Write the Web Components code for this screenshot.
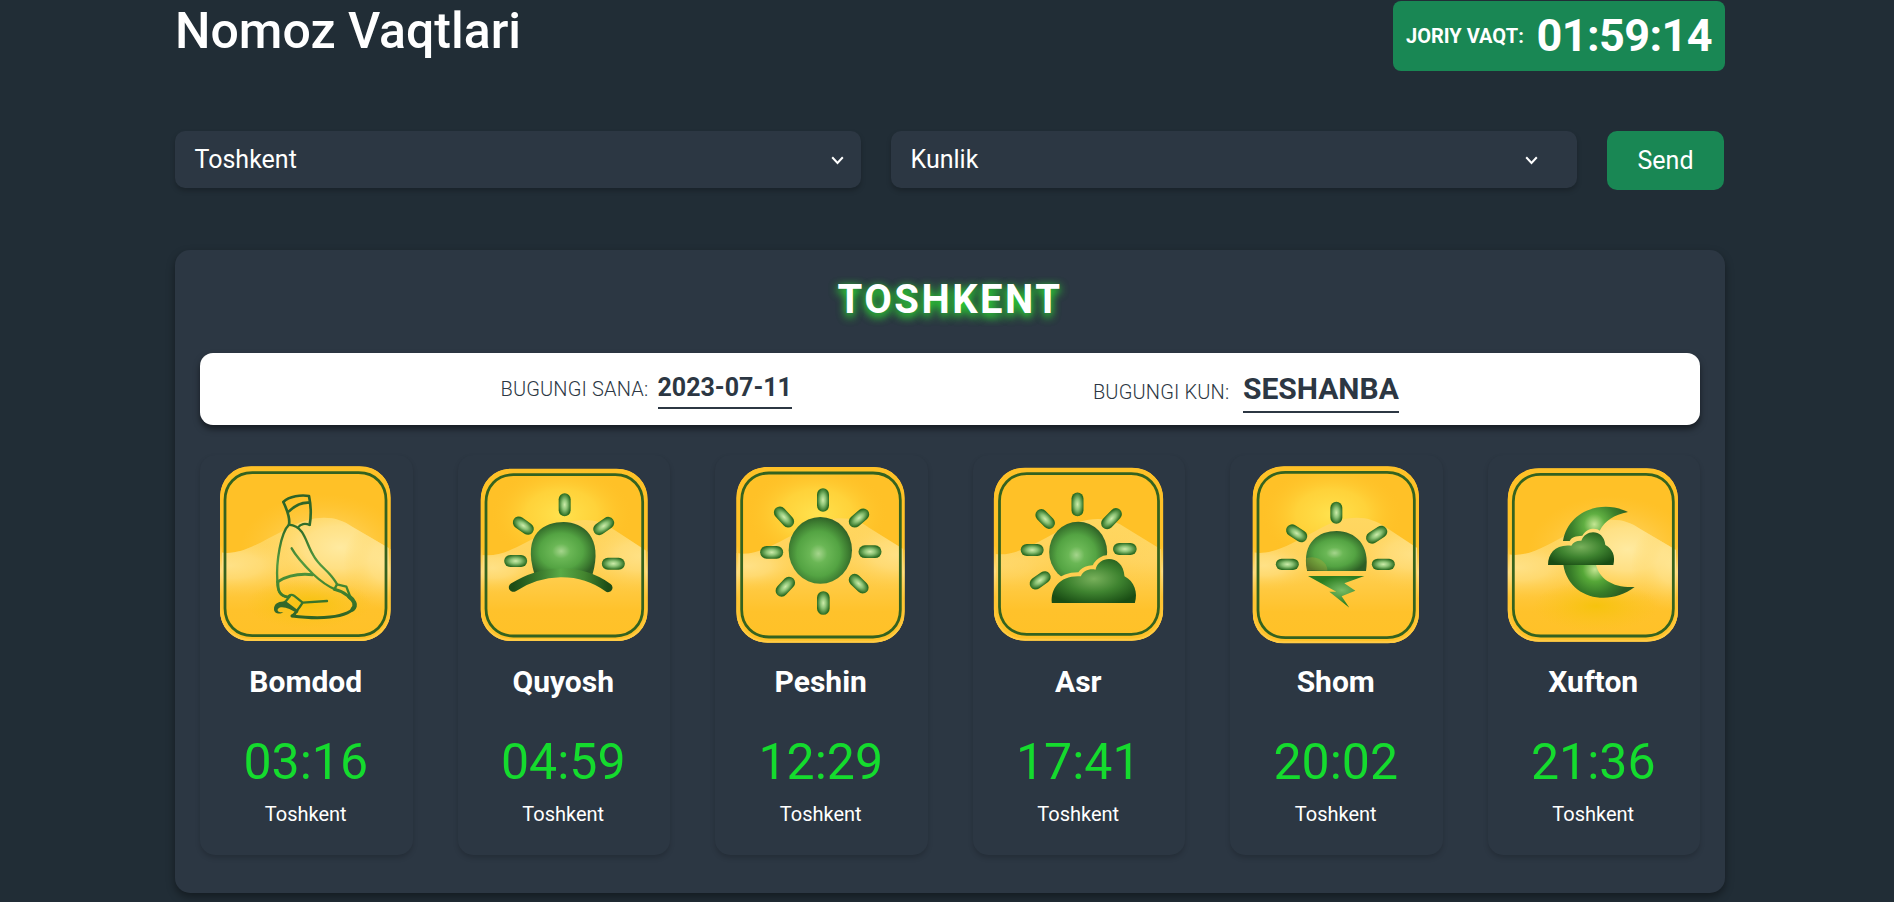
<!DOCTYPE html>
<html lang="uz">
<head>
<meta charset="utf-8">
<title>Nomoz Vaqtlari</title>
<style>
html,body{margin:0;height:100%;overflow:hidden}
body{background:#212d36;font-family:Roboto,sans-serif;color:#fff}
</style>
</head>
<body>
<prayer-app></prayer-app>
<script>
const define = (name, css, html) => customElements.define(name, class extends HTMLElement {
  connectedCallback() {
    if (this.shadowRoot) return;
    const t = document.createElement('template');
    t.innerHTML = `<style>*{box-sizing:border-box}${css}</style>${typeof html === 'function' ? html(this) : html}`;
    this.attachShadow({ mode: 'open' }).append(t.content.cloneNode(true));
  }
});

define('current-clock', `
:host{display:flex;align-items:center;box-sizing:border-box;width:332px;height:70px;background:#198754;border-radius:8px;padding:0 13px;justify-content:space-between;font-weight:700;white-space:nowrap}
.l{font-size:20px;line-height:24px}.t{font-size:45px;line-height:52px;letter-spacing:-.6px}`,
`<span class="l">JORIY VAQT:</span><span class="t"><slot></slot></span>`);

define('select-box', `
:host{display:flex;align-items:center;justify-content:space-between;box-sizing:border-box;width:686px;height:57px;padding:0 17px 0 19.5px;background:#2c3743;border-radius:10px;box-shadow:0 3px 5px rgba(0,0,0,.22);font-size:25px;line-height:30px}
:host([inset]){padding-right:39px}
svg{display:block;width:13px;height:9px;margin-top:1px}`,
`<span><slot></slot></span><svg viewBox="0 0 13 9"><path d="M1.2 1.3 6.5 7 11.8 1.3" fill="none" stroke="#fff" stroke-width="2"/></svg>`);

define('send-button', `
:host{display:block}
button{display:block;width:117px;height:59px;border:0;border-radius:10px;background:#198754;color:#fff;font:400 25px/30px Roboto,sans-serif;padding:0}`,
`<button><slot></slot></button>`);

define('date-field', `
:host{display:flex;align-items:baseline;color:#2c3743;white-space:nowrap}
.l{font-size:20px;font-weight:300;letter-spacing:.15px;width:var(--label,157px)}
.v{font-size:var(--size,25px);line-height:1.2;font-weight:700;border-bottom:2px solid #2c3743;padding-bottom:4px}`,
el => `<span class="l">${el.getAttribute('label')}</span><span class="v"><slot></slot></span>`);

/* Icon artwork: a rounded yellow tile with hills, plus one green motif each. */
const defs = `
<radialGradient id="sun" cx=".47" cy=".55" r=".56"><stop offset="0" stop-color="#a5d58c"/><stop offset=".25" stop-color="#6ab755"/><stop offset=".6" stop-color="#54a443"/><stop offset=".85" stop-color="#3c7b30"/><stop offset="1" stop-color="#2e5f26"/></radialGradient>
<radialGradient id="ray"><stop offset="0" stop-color="#cdebaa"/><stop offset=".45" stop-color="#8cc375"/><stop offset="1" stop-color="#2d6e23"/></radialGradient>
<radialGradient id="cloud" cx=".5" cy=".45" r=".62"><stop offset="0" stop-color="#78b05b"/><stop offset=".5" stop-color="#3f8430"/><stop offset="1" stop-color="#194d14"/></radialGradient>
<radialGradient id="glow"><stop offset="0" stop-color="#ffe24e"/><stop offset=".5" stop-color="#ffd840" stop-opacity=".75"/><stop offset="1" stop-color="#ffc127" stop-opacity="0"/></radialGradient>
<radialGradient id="pale"><stop offset="0" stop-color="#ffeaa0"/><stop offset=".4" stop-color="#ffe490" stop-opacity=".8"/><stop offset="1" stop-color="#ffd050" stop-opacity="0"/></radialGradient>
<radialGradient id="gold"><stop offset="0" stop-color="#f6c30e"/><stop offset="1" stop-color="#fac41a" stop-opacity="0"/></radialGradient>
<linearGradient id="hill" x2="0" y2="1"><stop offset="0" stop-color="#ffd761"/><stop offset=".35" stop-color="#ffd25a"/><stop offset=".75" stop-color="#ffc22b"/><stop offset="1" stop-color="#ffc127"/></linearGradient>
<linearGradient id="edge" x2="0" y2="1"><stop offset="0" stop-color="#ffc127"/><stop offset=".45" stop-color="#ffc127"/><stop offset=".6" stop-color="#ffdd80"/><stop offset=".75" stop-color="#ffc32f"/><stop offset="1" stop-color="#ffcb45"/></linearGradient>
<linearGradient id="man" gradientUnits="userSpaceOnUse" x1="0" y1="160" x2="0" y2="540"><stop offset="0" stop-color="#2d6127"/><stop offset=".3" stop-color="#32702b"/><stop offset=".55" stop-color="#539a40"/><stop offset=".75" stop-color="#41842f"/><stop offset="1" stop-color="#2c6024"/></linearGradient>
<linearGradient id="arc"><stop offset="0" stop-color="#1d4d16"/><stop offset=".3" stop-color="#3d7f2f"/><stop offset=".5" stop-color="#5aaa46"/><stop offset=".75" stop-color="#43852f"/><stop offset="1" stop-color="#1d4d16"/></linearGradient>
<radialGradient id="bolt" cx=".6" cy=".45" r=".45"><stop offset="0" stop-color="#78bd66"/><stop offset="1" stop-color="#2a7d20"/></radialGradient>
<radialGradient id="m1" gradientUnits="userSpaceOnUse" cx="358" cy="253" r="105"><stop offset="0" stop-color="#c4e693"/><stop offset=".3" stop-color="#60af42"/><stop offset=".65" stop-color="#3c812b"/><stop offset="1" stop-color="#2b5f22"/></radialGradient>
<radialGradient id="m2" gradientUnits="userSpaceOnUse" cx="360" cy="388" r="105"><stop offset="0" stop-color="#c4e693"/><stop offset=".35" stop-color="#56a838"/><stop offset=".7" stop-color="#377c28"/><stop offset="1" stop-color="#2b5f22"/></radialGradient>`;

const rr = (x, y, w, h, r) => `M${x + r} ${y}H${x + w - r}C${x + w - r * .38} ${y} ${x + w} ${y + r * .45} ${x + w} ${y + r}V${y + h - r}C${x + w} ${y + h - r * .42} ${x + w - r * .42} ${y + h} ${x + w - r} ${y + h}H${x + r}C${x + r * .42} ${y + h} ${x} ${y + h - r * .42} ${x} ${y + h - r}V${y + r}C${x} ${y + r * .45} ${x + r * .38} ${y} ${x + r} ${y}Z`;
const ray = (x, y, a, l = 69, w = 36) => `<rect x="${x - l / 2}" y="${y - w / 2}" width="${l}" height="${w}" rx="${w / 2}" fill="url(#ray)" transform="rotate(${a} ${x} ${y})"/>`;

function tile([x, y, x2, y2], [ix, iy, ix2, iy2], glow, pale) {
  const outer = rr(x, y, x2 - x, y2 - y, 94), h = y + 258;
  const hill = `M${x} ${h}C${x + 60} ${h + 12} ${x + 120} ${h - 30} ${x + 190} ${h - 65}C${x + 275} ${h - 115} ${x + 345} ${h - 115} ${x + 398} ${h - 76}L${x2} ${h - 9}V${y2}H${x}Z`;
  return `<clipPath id="c"><path d="${outer}"/></clipPath><clipPath id="hc"><path d="${hill}"/></clipPath><g clip-path="url(#c)">
<path d="${outer}" fill="#ffc127"/>
${glow ? `<ellipse cx="${glow[0]}" cy="${glow[1] + 18}" rx="215" ry="150" fill="url(#glow)"/>` : ''}
${pale ? `<ellipse cx="${x + 310}" cy="${h - 10}" rx="250" ry="165" fill="url(#pale)" opacity=".55"/>` : ''}
<path d="${hill}" fill="url(#hill)"/>
<g clip-path="url(#hc)">${pale ? `<ellipse cx="${x + 360}" cy="${h - 15}" rx="270" ry="160" fill="url(#pale)"/><ellipse cx="${x + 30}" cy="${h + 40}" rx="240" ry="95" fill="url(#pale)" opacity=".65"/><ellipse cx="${x + 500}" cy="${h + 30}" rx="130" ry="140" fill="url(#pale)" opacity=".75"/><ellipse cx="${x + 265}" cy="${h + 155}" rx="190" ry="75" fill="url(#gold)"/>` : `<ellipse cx="${x + 35}" cy="${h + 40}" rx="170" ry="75" fill="url(#pale)" opacity="${glow ? .65 : .25}"/><ellipse cx="${x2 - 20}" cy="${h + 5}" rx="190" ry="110" fill="url(#pale)" opacity="${glow ? .6 : .1}"/>`}</g>
</g>
<path d="${rr(x + 3, y + 3, x2 - x - 6, y2 - y - 6, 91)}" fill="none" stroke="url(#edge)" stroke-width="6"/>
<path d="${rr(ix, iy, ix2 - ix, iy2 - iy, 82)}" fill="none" stroke="#34621f" stroke-width="8.3"/>`;
}

const icons = {
  bomdod: [30, tile([90, 79, 602, 603], [105, 98, 588, 587], null, true) + `
<g fill="none" stroke="url(#man)" stroke-width="7" stroke-linejoin="round" stroke-linecap="round">
<path d="M280 186C298 168 334 164 357 168C363 197 364 226 359 254M280 186C291 209 301 232 297 254M297 214C312 199 336 186 359 188" stroke-width="8"/>
<path d="M359 255C346 249 331 251 324 263M297 254C272 278 258 366 262 423C262 452 269 468 292 471M297 254C306 255 324 261 335 275C349 295 356 323 369 344C384 373 408 388 422 406C431 417 437 425 441 433"/>
<path d="M305 325C321 354 345 378 369 402C390 422 411 438 437 449"/>
<path d="M263 425C293 406 330 400 368 404" stroke-width="9"/>
<path d="M441 433L469 440L482 474M441 433L433 448"/>
<path d="M264 425C263 455 271 466 292 471" stroke-width="8"/>
<path d="M433 448C458 453 492 477 495 493C498 514 456 527 420 531C381 536 339 532 306 528" stroke-width="9"/>
<path d="M478 470C492 480 500 495 488 508" stroke-width="13"/>
<path d="M306 528C320 516 329 502 338 488L411 483M338 488L312 467C304 462 295 466 294 473"/>
<path d="M283 487C291 484 292 475 300 468"/></g>
<path d="M252 508C251 489 271 481 291 486L326 512L322 520C302 508 285 499 268 503C257 510 265 519 280 516C270 525 252 521 252 508Z" fill="#34682a"/>
<path d="M304 526L324 512L316 528Z" fill="#34682a"/>`],
  quyosh: [24, tile([92, 86, 593, 603], [108, 104, 578, 588], [335, 205]) +
    ray(344, 194, 90) + ray(220, 257, 35) + ray(461, 258, -35) + ray(197, 363, 0) + ray(490, 371, 0) + `
<path d="M254 405C214 277 286 246 341 246C399 246 461 291 427 405Z" fill="url(#sun)"/>
<path d="M190 442C275 388 386 380 474 443" fill="none" stroke="url(#arc)" stroke-width="27" stroke-linecap="round"/>`],
  peshin: [30, tile([94, 81, 599, 608], [110, 99, 586, 591], [335, 205]) +
    ray(354, 180, 90, 71) + ray(237, 231, 48, 73) + ray(462, 234, -40) + ray(200, 337, 0, 69, 38) + ray(495, 335, 0, 69, 38) + ray(241, 440, -47) + ray(461, 431, 44) + ray(355, 489, 90, 71, 38) + `
<ellipse cx="346" cy="331" rx="95" ry="100" fill="url(#sun)"/>`],
  asr: [37.5, tile([100, 83, 608, 602], [117, 101, 594, 583], null) +
    ray(351, 193, 90, 71) + ray(254, 237, 46) + ray(453, 236, -46, 74) + ray(215, 330, 0) + ray(493, 327, 0, 71) + ray(239, 421, -35) + `
<ellipse cx="353" cy="336" rx="87" ry="91" fill="url(#sun)"/>
<path d="M274 489C270 444 299 405 361 409C367 393 387 385 405 389C415 344 488 343 492 409C522 424 533 459 523 489Z" fill="#ffce50" stroke="#ffce50" stroke-width="24" stroke-linejoin="round" clip-path="url(#sc)"/>
<clipPath id="sc"><ellipse cx="353" cy="336" rx="89" ry="93"/></clipPath>
<path d="M274 489C270 444 299 405 361 409C367 393 387 385 405 389C415 344 488 343 492 409C522 424 533 459 523 489Z" fill="url(#cloud)"/>`],
  shom: [30, tile([98, 79, 597, 610], [114, 97, 583, 593], [335, 205]) +
    ray(349, 218, 90, 66) + ray(230, 280, 33) + ray(470, 284, -33) + ray(202, 373, 0, 69, 34) + ray(490, 373, 0, 69, 34) + `
<path d="M261 391C245 305 298 273 350 273C406 273 452 316 438 393H261Z" fill="url(#sun)"/>
<path d="M261 391C258 377 258 365 259 354C300 342 325 375 322 392Z" fill="#c1a834" opacity=".3"/>
<path d="M264 408H433L373 430L406 452L365 469L388 503L328 455H349Z" fill="url(#bolt)"/>`],
  xufton: [39, tile([98, 85, 609, 605], [115, 103, 595, 588], null, true) + `
<path d="M264 303C280 211 382 178 459 216C417 224 389 243 374 272C365 263 336 262 322 287C302 288 290 291 284 303Z" fill="url(#m1)"/>
<path d="M265 374H363C373 416 413 444 479 441C400 502 281 475 265 374Z" fill="url(#m2)"/>
<path d="M219 375C219 338 243 312 289 317C295 306 306 301 319 302C332 266 387 267 391 315C413 326 422 349 415 375Z" fill="url(#cloud)"/>`]
};

define('prayer-icon', `:host{display:block;height:190px}svg{display:block;width:100%;height:100%}`, el => {
  const [vx, art] = icons[el.getAttribute('kind')];
  return `<svg viewBox="${vx} 45 637.5 570" aria-hidden="true"><defs>${defs}</defs>${art}</svg>`;
});

define('prayer-card', `
:host{display:flex;flex-direction:column;box-sizing:border-box;height:400px;border-radius:15px;background:#2c3743;box-shadow:0 3px 5px rgba(0,0,0,.17);text-align:center}
.n{font-size:30px;line-height:36px;font-weight:700;margin:19px 1px 0 0}
.t{font-size:50px;line-height:60px;color:#15db2e;margin:32px 1px 0 0}
.c{font-size:20px;line-height:24px;margin:10px 1px 0 0}`,
el => `<prayer-icon kind="${el.getAttribute('kind')}"></prayer-icon><div class="n">${el.getAttribute('name')}</div><div class="t">${el.getAttribute('time')}</div><div class="c"><slot></slot></div>`);

define('prayer-panel', `
:host{display:block;box-sizing:border-box;height:643px;margin-top:60px;padding:26px 25px 25px;background:#2c3743;border-radius:15px;box-shadow:0 4px 8px rgba(0,0,0,.4)}
h2{margin:0;text-align:center;font-size:40px;line-height:48px;font-weight:700;letter-spacing:2.5px;text-shadow:0 3px 10px #2bdc32,0 3px 10px rgba(43,220,50,.6)}
.bar{display:flex;align-items:flex-start;height:72px;margin-top:29px;padding:18px 290px 0 300.5px;background:#fff;border-radius:13px;box-shadow:0 4px 6px rgba(0,0,0,.5)}
.bar date-field{margin-top:2px}
.bar date-field+date-field{margin:0 0 0 301px;--size:30px;--label:150px}
.grid{display:grid;grid-template-columns:repeat(6,212.5px);gap:45px;margin-top:30px}`,
`<h2>TOSHKENT</h2>
<div class="bar"><date-field label="BUGUNGI SANA:">2023-07-11</date-field><date-field label="BUGUNGI KUN:">SESHANBA</date-field></div>
<div class="grid">${[['bomdod', 'Bomdod', '03:16'], ['quyosh', 'Quyosh', '04:59'], ['peshin', 'Peshin', '12:29'], ['asr', 'Asr', '17:41'], ['shom', 'Shom', '20:02'], ['xufton', 'Xufton', '21:36']].map(([k, n, t]) => `<prayer-card kind="${k}" name="${n}" time="${t}">Toshkent</prayer-card>`).join('')}</div>`);

define('prayer-app', `
:host{display:block;width:1550px;margin-left:175px}
header{display:flex;justify-content:space-between;align-items:flex-start;padding-top:1px;height:131px}
h1{margin:0;font-size:50px;line-height:60px;font-weight:500}
form{display:flex;gap:30px;align-items:flex-start;height:59px}`,
`<header><h1>Nomoz Vaqtlari</h1><current-clock>01:59:14</current-clock></header>
<form><select-box>Toshkent</select-box><select-box inset>Kunlik</select-box><send-button>Send</send-button></form>
<prayer-panel></prayer-panel>`);
</script>
</body>
</html>
